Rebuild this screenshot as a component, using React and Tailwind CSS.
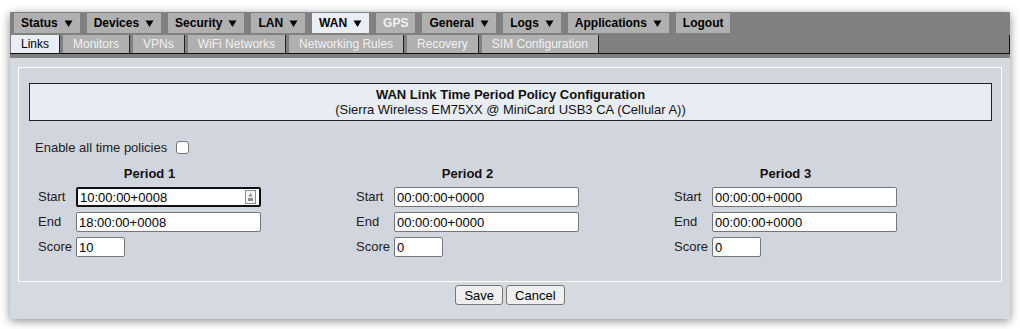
import { useState } from 'react'

const menu = [
    { label: 'Status', arrow: true },
    { label: 'Devices', arrow: true },
    { label: 'Security', arrow: true },
    { label: 'LAN', arrow: true },
    { label: 'WAN', arrow: true, active: true },
    { label: 'GPS', disabled: true },
    { label: 'General', arrow: true },
    { label: 'Logs', arrow: true },
    { label: 'Applications', arrow: true },
    { label: 'Logout' },
]

const subMenu = ['Links', 'Monitors', 'VPNs', 'WiFi Networks', 'Networking Rules', 'Recovery', 'SIM Configuration']

const periods = [
    { name: 'Period 1', start: '10:00:00+0008', end: '18:00:00+0008', score: '10', focused: true },
    { name: 'Period 2', start: '00:00:00+0000', end: '00:00:00+0000', score: '0' },
    { name: 'Period 3', start: '00:00:00+0000', end: '00:00:00+0000', score: '0' },
]

function TextBox({ value, width, focused }) {
    const [val, setVal] = useState(value)
    return (
        <div className={`relative h-[20px] ${width}`}>
            <input
                type="text"
                value={val}
                onChange={(e) => setVal(e.target.value)}
                className={`block w-full h-[20px] bg-white rounded-[2px] px-[2px] text-[13px] leading-[16px] text-black outline-none ${focused ? 'border-2 border-[#101010]' : 'border border-[#767676]'}`}
            />
            {focused && (
                <svg className="absolute right-[5px] top-[3px]" width="11" height="14" viewBox="0 0 11 14">
                    <rect x="0.5" y="0.5" width="10" height="13" fill="#f4f4f4" stroke="#8a8a8a" />
                    <path d="M5.5 3 L7.5 6.5 H3.5 Z" fill="#8a8a8a" />
                    <rect x="3" y="8" width="5" height="3" fill="#8a8a8a" />
                </svg>
            )}
        </div>
    )
}

function Row({ label, children }) {
    return (
        <div className="flex h-[20px]">
            <span className="w-[38px] h-[20px] leading-[20px] text-[13px] text-[#222]">{label}</span>
            {children}
        </div>
    )
}

function PeriodTable({ p }) {
    return (
        <div className="w-[318px] shrink-0">
            <div className="w-[223px] text-center font-bold text-[13px] h-[15px] leading-[15px] text-[#111]">{p.name}</div>
            <div className="mt-[6px] flex flex-col gap-[5px]">
                <Row label="Start">
                    <TextBox value={p.start} width="w-[185px]" focused={p.focused} />
                </Row>
                <Row label="End">
                    <TextBox value={p.end} width="w-[185px]" />
                </Row>
                <Row label="Score">
                    <TextBox value={p.score} width="w-[49px]" />
                </Row>
            </div>
        </div>
    )
}

export default function App() {
    return (
        <div className="w-[1020px] h-[329px] bg-white pt-[12px] px-[10px] overflow-hidden" style={{ fontFamily: '"Liberation Sans", Arial, sans-serif' }}>
            <div className="w-[1000px] h-[307px] bg-[#d5d9e0] shadow-[0_2px_9px_rgba(0,0,0,0.45)] flex flex-col">
                {/* top menu */}
                <div className="bg-[#808080] pt-[1px]">
                    <div className="flex gap-[7px] pl-[4px]">
                        {menu.map((m) => (
                            <div
                                key={m.label}
                                className={`h-[20px] px-[7px] flex items-center text-[12px] font-bold ${m.active ? 'bg-[#e8edf6] text-black' : m.disabled ? 'bg-[#b0b0b0] text-[#f2f2f2]' : 'bg-[#b0b0b0] text-black'}`}
                            >
                                {m.label}
                                {m.arrow && (
                                    <svg className="ml-[6px]" width="9" height="7" viewBox="0 0 9 7">
                                        <path d="M0.5 0.5 H8.5 L4.5 7 Z" fill="#000" />
                                    </svg>
                                )}
                            </div>
                        ))}
                    </div>
                    <div className="mt-[2px] flex h-[19px] border-b border-r border-[#111] pl-[1px]">
                        {subMenu.map((s, i) => (
                            <div
                                key={s}
                                className={`h-[18px] px-[10px] mr-[3px] border-r border-[#222] flex items-center text-[12px] ${i === 0 ? 'bg-[#e8edf6] text-black' : 'bg-[#b0b0b0] text-[#f2f2f2]'}`}
                            >
                                {s}
                            </div>
                        ))}
                    </div>
                    <div className="h-[4px]" />
                </div>

                {/* content */}
                <div className="flex-1 px-[8px] pt-[9px]">
                    <div className="h-[215px] border border-white bg-[#d1d5dd] pt-[15px] pl-[10px] pr-[9px]">
                        <div className="h-[38px] bg-[#e8edf5] border border-[#222] flex flex-col items-center justify-center text-[13px] leading-[15px] text-[#111]">
                            <div className="font-bold">WAN Link Time Period Policy Configuration</div>
                            <div>(Sierra Wireless EM75XX @ MiniCard USB3 CA (Cellular A))</div>
                        </div>
                        <div className="mt-[19px] pl-[6px] flex items-center h-[15px] text-[13px] text-[#222]">
                            <span>Enable all time policies</span>
                            <input type="checkbox" className="ml-[9px] w-[13px] h-[13px] appearance-none bg-white border border-[#767676] rounded-[3px]" />
                        </div>
                        <div className="mt-[11px] flex pl-[9px]">
                            {periods.map((p) => (
                                <PeriodTable key={p.name} p={p} />
                            ))}
                        </div>
                    </div>
                    <div className="mt-[3px] flex justify-center gap-[3px]">
                        <button className="h-[20px] px-[8px] bg-[#efefef] border border-[#767676] rounded-[3px] text-[13px] text-black">Save</button>
                        <button className="h-[20px] px-[8px] bg-[#efefef] border border-[#767676] rounded-[3px] text-[13px] text-black">Cancel</button>
                    </div>
                </div>
            </div>
        </div>
    )
}
